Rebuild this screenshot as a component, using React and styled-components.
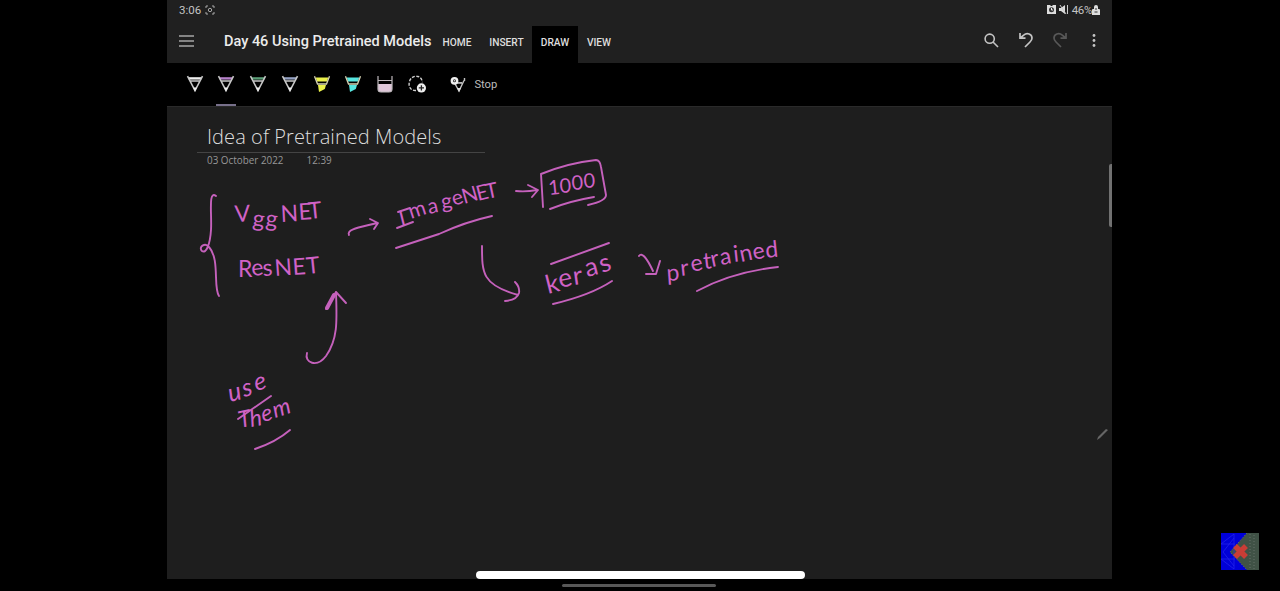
import React from "react";
import styled, { createGlobalStyle } from "styled-components";

const GlobalStyle = createGlobalStyle`
  * { box-sizing: border-box; }
  body { margin: 0; background: #000; overflow: hidden; }
`;

const Screen = styled.div`
  width: 1280px;
  height: 591px;
  background: #000;
  padding-left: 167px;
  position: relative;
  overflow: hidden;
  font-family: Roboto, sans-serif;
`;

const Tablet = styled.main`
  width: 945px;
  height: 591px;
  display: flex;
  flex-direction: column;
`;

const StatusBar = styled.div`
  height: 26px;
  flex: none;
  background: #202020;
  display: flex;
  align-items: center;
  padding: 0 12px 7px 12px;
  color: #c4c4c4;
  font-size: 11.5px;
  line-height: 14px;
`;

const CaptureIcon = styled.svg`
  margin-left: 4px;
`;

const StatusIcons = styled.div`
  margin-left: auto;
  display: flex;
  align-items: center;
  gap: 3px;
`;

const Battery = styled.span`
  display: flex;
  align-items: center;
  letter-spacing: -0.35px;
`;

const Header = styled.header`
  height: 37px;
  flex: none;
  background: #202020;
  display: flex;
  align-items: stretch;
`;

const MenuButton = styled.button`
  border: 0;
  background: none;
  padding: 0;
  width: 15px;
  margin: 0 30px 8px 12px;
  color: #a5a5a5;
  display: flex;
  align-items: center;
`;

const NotebookTitle = styled.h1`
  margin: 0;
  width: 209px;
  font-size: 14.5px;
  font-weight: 500;
  line-height: 31px;
  color: #ececec;
  white-space: nowrap;
`;

const Tab = styled.button`
  border: 0;
  padding: 0 0 4px;
  width: ${(p) => p.$width}px;
  background: ${(p) => (p.$active ? "#000" : "transparent")};
  color: #dedede;
  font: 500 10.2px Roboto, sans-serif;
  white-space: nowrap;
`;

const Actions = styled.div`
  margin-left: auto;
  padding: 0 10px 9px 0;
  display: flex;
  align-items: center;
  gap: 18px;

  > :first-child {
    margin-right: 1.5px;
  }
`;

const Toolbar = styled.div`
  height: 43px;
  flex: none;
  background: #000;
  padding-left: 17.5px;
  display: flex;
  align-items: stretch;
`;

const Tool = styled.button`
  width: 20px;
  margin-right: 11.8px;
  padding: 0;
  border: 0;
  border-bottom: 2px solid ${(p) => (p.$selected ? "#77708a" : "transparent")};
  background: none;
  display: flex;
  align-items: center;
  justify-content: center;
`;

const StopButton = styled.button`
  margin-left: 11.5px;
  padding: 0 0 1px;
  border: 0;
  background: none;
  color: #bdbdbd;
  font: 400 11.2px Roboto, sans-serif;
  display: flex;
  align-items: center;
  gap: 7px;
`;

const Page = styled.section`
  height: 473px;
  flex: none;
  position: relative;
  background: #1e1e1e;
  border-top: 1px solid #2a2a2a;
  padding: 14px 0 0 30px;
  font-family: "Open Sans", "Noto Sans", sans-serif;
`;

const PageTitle = styled.h2`
  margin: 0;
  width: 288px;
  height: 32px;
  padding-left: 10px;
  border-bottom: 1px solid #444;
  font-size: 20px;
  font-weight: 300;
  line-height: 31px;
  color: #dedede;
  letter-spacing: 0.08px;
  white-space: nowrap;
`;

const PageDate = styled.div`
  display: flex;
  gap: 23px;
  padding-left: 10px;
  font-size: 9.9px;
  line-height: 15px;
  color: #979797;
`;

const Ink = styled.svg`
  position: absolute;
  left: 0;
  top: -1px;
  fill: none;
  stroke: #c561bc;
  stroke-width: 1.9;
  stroke-linecap: round;
  stroke-linejoin: round;
`;

const Word = styled.text`
  font-family: Lato, sans-serif;
  font-size: ${(p) => p.$size}px;
  font-weight: 400;
  font-style: ${(p) => (p.$slanted ? "italic" : "normal")};
  fill: #d062c6;
  stroke: none;
`;

const ScrollThumb = styled.div`
  position: absolute;
  right: 0;
  top: 57px;
  width: 3px;
  height: 63px;
  border-radius: 2px 0 0 2px;
  background: #717171;
`;

const EditHandle = styled.svg`
  position: absolute;
  right: 3px;
  top: 321px;
`;

const ProgressBar = styled.div`
  position: absolute;
  left: 476px;
  top: 571px;
  width: 329px;
  height: 8px;
  border-radius: 4px;
  background: #fff;
`;

const GestureBar = styled.div`
  position: absolute;
  left: 562px;
  top: 584px;
  width: 154px;
  height: 3px;
  border-radius: 2px;
  background: #585858;
`;

const Watermark = styled.svg`
  position: absolute;
  left: 1221px;
  top: 532px;
`;

const Pen = ({ color }) => (
  <svg width="18" height="18" viewBox="0 0 18 18" fill="none">
    <path d="M2.8 3.4h12.4" stroke={color} strokeWidth="2.4" />
    <path d="M1.5 1.2L9 15.6l7.5-14.4M4 6h10" stroke="#c6c6c6" strokeWidth="1.6" />
    <path d="M7 12.6h4L9 16.8z" fill="#eee" />
  </svg>
);

const Marker = ({ color }) => (
  <svg width="18" height="18" viewBox="0 0 18 18" fill="none">
    <path d="M2.8 2.5h12.4l-1.1 4H3.9z" fill={color} />
    <path d="M5 10h8l-1.2 4L6 17z" fill={color} />
    <path d="M1.5 1.2l3 7.8h9l3-7.8" stroke="#d7d5b4" strokeWidth="1.3" />
  </svg>
);

const Eraser = () => (
  <svg width="18" height="18" viewBox="0 0 18 18" fill="none">
    <path d="M2 9h14v5q0 3-3 3H5q-3 0-3-3z" fill="#dfc7d9" />
    <path d="M2 1v13q0 3 3 3h8q3 0 3-3V1M2 5.5h14" stroke="#bdb7bb" strokeWidth="1.2" />
  </svg>
);

const Lasso = () => (
  <svg width="20" height="20" viewBox="0 0 20 20" fill="none">
    <path d="M9 16.5C4 17 1.5 13 2.2 8.5 3 4.5 6 2 9.5 2.2c3.5.1 5.5 2.8 5.8 6" stroke="#cfcfcf" strokeWidth="1.4" strokeDasharray="3 1.5" />
    <circle cx="14.4" cy="13.9" r="4.6" fill="#eee" />
    <path d="M14.4 11.3v5.2M11.8 13.9H17" stroke="#222" strokeWidth="1.3" />
  </svg>
);

const StopIcon = () => (
  <svg width="17" height="17" viewBox="0 0 17 17" fill="none">
    <path d="M4 6l5 9 5-10.5M6 7l6-.3M14.5 2v3" stroke="#c4c4c4" strokeWidth="1.4" />
    <path d="M7 12h4l-2 4z" fill="#ddd" />
    <circle cx="4.5" cy="4.8" r="2.7" fill="#222" stroke="#eee" strokeWidth="2.4" />
    <circle cx="4.5" cy="4.8" r="0.8" fill="#ddd" />
  </svg>
);

const Undo = ({ color, flipped }) => (
  <svg width="16" height="18" viewBox="0 0 16 18" fill="none" stroke={color} strokeWidth="1.7">
    <g transform={flipped ? "translate(16 0) scale(-1 1)" : undefined}>
      <path d="M2 2v5.2h5.5M2.3 7L6 3.9C9 1.2 14 3 14 7c0 2-1 3-2 4l-5 5" />
    </g>
  </svg>
);

const tools = [
  <Pen color="#f0f0f0" />,
  <Pen color="#b580c8" />,
  <Pen color="#5a9c76" />,
  <Pen color="#929fc1" />,
  <Marker color="#eaf04a" />,
  <Marker color="#57e5df" />,
  <Eraser />,
  <Lasso />,
];

const tabs = [["HOME", 48], ["INSERT", 51], ["DRAW", 46], ["VIEW", 42]];

// x, y and tilt list one value per letter
const words = [
  { text: "VggNET", size: 23, x: "235 252 265 281 299 309", y: "222 226 226 222 220 219", tilt: "-3 6 6 -3 -4 -6" },
  { text: "ResNET", size: 23, x: "238 252 263 275 293 307", y: "277 276 276 276 275 274", tilt: "0 -6 -4 -4 -4 -6" },
  { text: "ImageNET", size: 21, x: "401 411 429 442 454 464 478 487", y: "226 219 214 209 206 204 201 199", tilt: "-14 -18 -12 -8 -18 -16 -14 -12" },
  { text: "1000", size: 20, x: "549 560 572 584", y: "195 193 190 188", tilt: "-6 -4 -4 -4" },
  { text: "keras", size: 26, x: "548 560 574 587 602", y: "294 288 285 277 273", tilt: "-14 -12 -8 -14 -18" },
  { text: "pretrained", size: 23, x: "667 681 692 704 712 721 734 741 754 766", y: "281 276 272 269 267 265 262 262 260 258", tilt: "-4 -6 -12 -6 -12 -10 -6 -12 -12 -6" },
  { text: "use", size: 25, slanted: true, x: "230 244 256", y: "402 397 391", tilt: "-14 -14 -14" },
  { text: "Them", size: 23, slanted: true, x: "240 251 263 275", y: "428 427 422 418", tilt: "-12 -10 -14 -18" },
];

const strokes = [
  "M216 196C208 190 212 214 211 230C210 245 206 254 202 251C198 247 205 242 209 247C220 259 213 288 219 296",
  "M349 235C346 229 362 227 377 223M370 219L378 223L374 229",
  "M396 248L439 234Q465 222 492 216",
  "M397 228L413 222M398 212L410 208",
  "M516 191Q526 192 537 190M528 185L538 190L532 197",
  "M543 207L541 174Q568 163 596 160Q600 160 601 167L606 195Q606 201 588 205",
  "M550 209Q570 201 594 197",
  "M482 246C482 273 482 285 518 295M515 282Q520 287 519 293Q517 300 505 301",
  "M551 264L609 243M553 304Q591 295 612 281",
  "M639 256Q643 250 653 271M660 261L656 274L646 274",
  "M697 291Q732 272 778 267",
  "M307 353C304 363 317 368 326 356C338 339 337 321 336 292M326 309L336 292L346 303",
  "M238 419L271 396M255 449Q276 442 290 430",
];

export default function App() {
  return (
    <>
      <GlobalStyle />
      <Screen>
        <Tablet>
          <StatusBar>
            <span>3:06</span>
            <CaptureIcon width="10" height="10" viewBox="0 0 10 10" fill="none" stroke="#a8a8a8">
              <path d="M1 3V1h2M7 1h2v2M9 7v2H7M3 9H1V7" />
              <circle cx="5" cy="5" r="1.7" />
            </CaptureIcon>
            <StatusIcons>
              <svg width="9" height="9" viewBox="0 0 9 9">
                <path d="M0 0h3l1 1h1l1-1h3v9H0z" fill="#ddd" />
                <circle cx="4.5" cy="4.8" r="2.5" fill="#333" />
                <path d="M4.5 3v2H6" fill="none" stroke="#eee" />
              </svg>
              <svg width="10" height="9" viewBox="0 0 10 9">
                <path d="M0 3h2l4-3v9L2 6H0z" fill="#ddd" />
                <path d="M1 0l6 9M8.5 0v9" stroke="#ccc" />
              </svg>
              <Battery>
                46%
                <svg width="8" height="10" viewBox="0 0 8 10">
                  <path d="M2 2q0-2 2-2t2 2v2h1q1 0 1 1v5H0V5q0-1 1-1h1z" fill="#ddd" />
                  <path d="M4 3v2M2.5 7h3" stroke="#333" />
                </svg>
              </Battery>
            </StatusIcons>
          </StatusBar>
          <Header>
            <MenuButton aria-label="Menu">
              <svg width="15" height="12" viewBox="0 0 15 12" stroke="currentColor" strokeWidth="1.5">
                <path d="M0 1h15M0 6h15M0 11h15" />
              </svg>
            </MenuButton>
            <NotebookTitle>Day 46 Using Pretrained Models</NotebookTitle>
            {tabs.map(([label, width]) => (
              <Tab key={label} $width={width} $active={label === "DRAW"}>{label}</Tab>
            ))}
            <Actions>
              <svg width="16" height="16" viewBox="0 0 16 16" fill="none" stroke="#c4c4c4" strokeWidth="1.6">
                <circle cx="6.7" cy="6.7" r="4.6" />
                <path d="M10 10l5 5" />
              </svg>
              <Undo color="#c4c4c4" />
              <Undo color="#585858" flipped />
              <svg width="16" height="16" viewBox="0 0 16 16" fill="#c4c4c4">
                <circle cx="8" cy="3.5" r="1.4" />
                <circle cx="8" cy="8.5" r="1.4" />
                <circle cx="8" cy="13.5" r="1.4" />
              </svg>
            </Actions>
          </Header>
          <Toolbar>
            {tools.map((icon, i) => (
              <Tool key={i} $selected={i === 1}>{icon}</Tool>
            ))}
            <StopButton><StopIcon />Stop</StopButton>
          </Toolbar>
          <Page>
            <PageTitle>Idea of Pretrained Models</PageTitle>
            <PageDate><span>03 October 2022</span><span>12:39</span></PageDate>
            <Ink width="945" height="473" viewBox="167 106 945 473">
              {strokes.map((d) => <path key={d} d={d} />)}
              <path d="M327 308L334 295" strokeWidth="4" />
              {words.map((w) => (
                <Word key={w.text} $size={w.size} $slanted={w.slanted} x={w.x} y={w.y} rotate={w.tilt}>
                  {w.text}
                </Word>
              ))}
            </Ink>
            <ScrollThumb />
            <EditHandle width="13" height="13" viewBox="0 0 13 13">
              <path d="M1 12l1-3 8-8 2 1-8 8z" fill="#666" />
            </EditHandle>
          </Page>
        </Tablet>
        <ProgressBar />
        <GestureBar />
        <Watermark width="39" height="39" viewBox="0 0 39 39">
          <path d="M0 1h38v37H0z" fill="#405246" />
          <path d="M0 1h26L9 20l17 18H0z" fill="#0000d8" />
          <path d="M0 12h14M0 27h14M13 2v35M0 12l13-10M0 27l13 10M2 20L13 6M2 20l11 14" stroke="#2525ed" fill="none" strokeWidth=".7" />
          <path d="M26 1L9 20l17 18M29 2v35M33 3v34" stroke="#657069" strokeDasharray="1 2" fill="none" />
          <path d="M14 14l11 11M25 14L14 25" stroke="#c93d36" strokeWidth="5.5" />
        </Watermark>
      </Screen>
    </>
  );
}
